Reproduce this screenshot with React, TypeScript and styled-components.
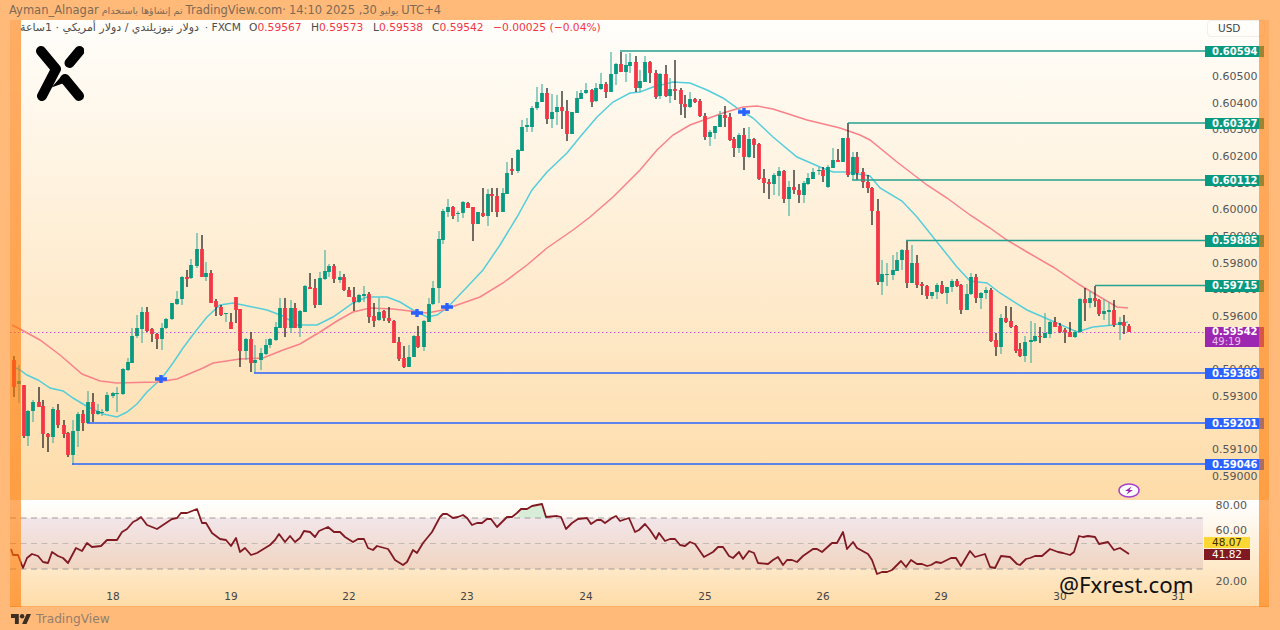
import React from "react";
import styled, { createGlobalStyle } from "styled-components";

const GlobalStyle = createGlobalStyle`
  html, body { margin: 0; padding: 0; background: #ffba7a; }
  body { font-family: "DejaVu Sans", sans-serif; }
`;

const Page = styled.div`
  width: 1280px;
  height: 630px;
  overflow: hidden;
  display: flex;
  flex-direction: column;
  background: #ffba7a;
`;

const TopBar = styled.div`
  height: 20px;
  padding-left: 9px;
  display: flex;
  align-items: center;
  gap: 3px;
  font-size: 11.5px;
  color: #7d6a55;
  white-space: nowrap;
`;

const Seg = styled.span<{ $rtl?: boolean; $size?: number }>`
  direction: ${(p) => (p.$rtl ? "rtl" : "ltr")};
  ${(p) => (p.$size ? `font-size: ${p.$size}px;` : "")}
`;

const Frame = styled.div`
  position: relative;
  width: 1259px;
  margin-left: 10px;
  display: flex;
  flex-direction: column;
`;

const MainPane = styled.div`
  position: relative;
  height: 480px;
  background: linear-gradient(#fffefb, #fedca9);
  overflow: hidden;
`;

const RsiPane = styled.div`
  position: relative;
  height: 106px;
  background: linear-gradient(#ffffff, #fedca9);
  border-bottom: 1px solid #ffad60;
  overflow: hidden;
`;

const Plot = styled.svg`
  position: absolute;
  inset: 0;
  display: block;
`;

const SideStrip = styled.div<{ $side: "left" | "right" }>`
  position: absolute;
  top: 0;
  bottom: 0;
  ${(p) => p.$side}: 0;
  width: ${(p) => (p.$side === "left" ? 11 : 10)}px;
  background: rgba(255, 118, 0, 0.6);
  pointer-events: none;
`;

const Legend = styled.div`
  position: absolute;
  left: 10px;
  top: 0;
  height: 14px;
  display: flex;
  align-items: center;
  font-size: 10.7px;
  color: #4d4d4d;
  white-space: nowrap;
`;

const LegendName = styled.span`
  display: flex;
  justify-content: space-between;
  width: 229px;
  padding-right: 8px;
  box-sizing: border-box;
`;

const LegendValue = styled.span<{ $w: number }>`
  width: ${(p) => p.$w}px;
`;

const Red = styled.span`
  color: #f23645;
`;

const Logo = styled.svg`
  position: absolute;
  left: 26px;
  top: 26px;
`;

const UsdButton = styled.div`
  position: absolute;
  left: 1197px;
  top: 0;
  width: 58px;
  height: 17px;
  box-sizing: border-box;
  padding-left: 10px;
  border: 1px solid #f3eee8;
  border-radius: 4px;
  font-size: 10.5px;
  line-height: 15px;
  color: #444;
`;

const AxisText = styled.div<{ $y: number }>`
  position: absolute;
  left: 1202px;
  top: ${(p) => p.$y - 6}px;
  height: 14px;
  font-size: 11px;
  line-height: 14px;
  color: #555;
`;

const PriceTag = styled.div<{ $y: number; $bg: string }>`
  position: absolute;
  left: 1195px;
  top: ${(p) => p.$y - 5.5}px;
  width: 59px;
  height: 11.5px;
  padding-left: 7px;
  box-sizing: border-box;
  background: ${(p) => p.$bg};
  color: #fff;
  font-size: 10px;
  font-weight: 700;
  line-height: 11.5px;
`;

const LiveTag = styled.div`
  position: absolute;
  left: 1195px;
  top: 307px;
  width: 59px;
  height: 20px;
  padding: 0 0 0 7px;
  box-sizing: border-box;
  background: #9c27b0;
  color: #fff;
  font-size: 10px;
  font-weight: 700;
  line-height: 10px;
`;

const LiveTime = styled.div`
  color: #e6c4ec;
  font-weight: 400;
`;

const Bolt = styled.svg`
  position: absolute;
  left: 1108px;
  top: 463px;
`;

const RsiTag = styled.div<{ $y: number; $bg: string; $fg: string }>`
  position: absolute;
  left: 1194px;
  top: ${(p) => p.$y}px;
  width: 46px;
  height: 11px;
  background: ${(p) => p.$bg};
  color: ${(p) => p.$fg};
  font-size: 10.5px;
  line-height: 11px;
  text-align: center;
`;

const TimeText = styled.div<{ $x: number }>`
  position: absolute;
  top: 90px;
  left: ${(p) => p.$x - 30}px;
  width: 40px;
  text-align: center;
  font-size: 10.5px;
  line-height: 13px;
  color: #444;
`;

const Watermark = styled.div`
  position: absolute;
  left: 1049px;
  top: 69px;
  font-family: "Noto Sans", sans-serif;
  font-size: 22.3px;
  line-height: 32px;
  color: #111;
  white-space: nowrap;
`;

const Footer = styled.div`
  padding: 5px 0 0 10px;
  display: flex;
  align-items: center;
  gap: 4px;
  font-size: 12.2px;
  color: #927f6b;
`;

// x, body top, body bottom, wick top, wick bottom, 1 = up / 0 = down
const C: number[][] = [
[14,360,387,356,397,0],[19,381,384,365,403,1],[24,385,436,385,438,0],[28,411,436,410,446,1],[33,402,411,400,422,1],[39,402,407,387,407,0],[43,406,434,400,448,0],[48,434,437,433,452,0],[53,409,437,407,443,1],[58,410,425,404,428,0],[64,425,434,420,438,0],[68,433,455,432,457,0],[73,431,455,420,465,1],[78,414,431,412,447,1],[83,414,423,410,431,0],[88,402,423,391,423,1],[93,402,414,393,422,0],[98,411,414,404,415,1],[102,412,413,409,416,1],[107,395,411,392,412,1],[113,393,396,392,398,1],[117,393,394,387,412,1],[123,369,394,368,395,1],[128,362,370,358,371,1],[132,336,363,328,363,1],[137,328,336,315,338,1],[142,312,329,307,343,1],[147,312,331,307,332,0],[152,329,334,328,342,0],[157,334,339,333,349,0],[162,328,339,323,350,1],[166,319,328,318,329,1],[172,303,319,303,320,1],[177,299,304,291,305,1],[182,277,299,276,305,1],[187,277,279,270,287,0],[191,265,278,259,279,1],[197,249,266,233,268,1],[202,249,277,235,277,0],[206,273,277,262,281,1],[211,273,303,270,303,0],[216,301,307,299,316,0],[221,307,315,305,316,0],[226,313,314,313,322,1],[231,322,329,313,329,0],[236,297,310,297,323,0],[240,309,351,309,367,0],[246,339,351,338,360,1],[251,339,363,332,372,0],[255,360,363,345,373,1],[261,353,360,348,370,1],[266,345,354,339,355,1],[270,339,345,338,348,1],[276,327,340,322,341,1],[280,308,328,298,328,1],[285,308,328,298,337,0],[291,308,328,300,333,1],[295,308,328,303,328,0],[300,311,328,310,337,1],[305,286,312,285,312,1],[310,287,289,273,289,0],[315,288,305,279,308,0],
[320,278,305,272,305,1],[325,271,279,250,280,1],[329,266,272,264,277,1],[334,266,279,264,283,0],[340,277,280,271,283,1],[344,277,290,274,291,0],[349,290,297,287,297,0],[354,297,302,287,311,0],[359,295,302,294,303,1],[364,294,296,286,302,1],[369,294,317,292,323,0],[374,316,321,303,327,0],[379,312,320,298,321,1],[384,311,318,310,321,0],[389,318,321,307,323,0],[394,321,343,320,343,0],[399,342,359,337,361,0],[404,358,367,346,368,0],[409,357,367,345,367,1],[414,336,357,335,357,1],[418,336,347,326,348,0],[424,321,347,320,351,1],[429,304,322,298,322,1],[433,288,304,281,305,1],[439,239,288,231,303,1],[443,211,240,209,244,1],[448,207,212,199,217,1],[453,207,216,206,219,0],[458,213,214,211,222,1],[463,202,213,201,218,1],[468,203,208,202,208,0],[473,207,224,207,241,0],[478,212,224,212,224,1],[483,213,216,188,217,0],[488,194,216,189,226,1],[492,194,196,188,212,0],[497,196,212,188,217,0],[503,193,212,188,212,1],[507,173,194,162,194,1],[512,169,171,158,175,0],[518,150,171,149,173,1],[522,127,151,120,151,1],[527,125,127,118,132,1],[532,108,127,106,132,1],[537,102,108,87,110,1],[542,93,102,84,102,1],[547,93,119,88,124,0],[552,112,119,94,128,1],[557,107,112,95,125,1],[562,107,111,91,129,0],[567,111,134,100,141,0],[572,112,134,112,134,1],[577,98,113,91,113,1],[581,93,99,90,99,1],[586,90,93,83,94,1],[592,90,102,89,107,0],[596,88,101,83,102,1],[601,84,89,73,90,1],[606,84,92,82,98,0],[611,74,92,52,92,1],[616,64,74,63,85,1],[621,64,72,52,72,0],[626,65,72,54,82,1],[630,62,66,53,73,1],[636,62,88,56,92,0],
[640,81,88,70,92,1],[645,62,82,56,82,1],[650,62,73,61,83,0],[656,73,97,70,99,0],[660,74,96,73,99,1],[666,74,96,65,97,0],[670,89,96,78,103,1],[675,89,91,60,100,0],[681,90,104,88,115,0],[685,104,107,95,118,0],[690,99,107,92,108,1],[695,99,102,98,103,0],[700,101,116,99,117,0],[705,116,137,113,140,0],[710,132,137,130,146,1],[715,126,133,126,139,1],[720,115,127,111,127,1],[725,115,118,106,127,0],[730,117,140,113,141,0],[734,139,148,137,157,0],[739,135,148,133,153,1],[744,135,157,128,170,0],[749,139,157,127,158,1],[754,139,145,138,158,0],[759,144,179,143,180,0],[764,178,183,169,193,0],[769,182,184,179,199,0],[774,175,184,173,195,1],[779,171,176,167,196,1],[784,171,199,170,203,0],[789,187,199,181,216,1],[794,187,190,170,194,0],[799,190,195,184,203,0],[804,183,195,181,203,1],[808,178,184,173,185,1],[813,172,179,168,179,1],[819,170,171,167,175,1],[823,170,176,167,182,0],[828,167,187,165,188,1],[833,160,168,148,168,1],[838,160,162,149,162,0],[843,138,162,138,162,1],[848,138,175,123,177,0],[853,157,175,152,180,1],[857,157,173,152,180,0],[863,172,182,168,188,0],[868,182,188,175,193,0],[872,188,211,187,225,0],[878,211,282,199,285,0],[882,274,282,260,295,1],[887,274,275,263,286,1],[893,270,275,255,280,1],[897,260,271,252,271,1],[902,250,260,249,270,1],[907,250,283,241,288,0],[912,263,283,245,283,1],[917,263,285,255,288,0],[922,284,286,282,295,0],[927,286,296,285,299,0],[932,292,296,292,299,1],[937,285,292,283,299,1],[942,285,293,281,294,0],[947,287,293,287,304,1],[952,281,287,279,292,1],[957,281,286,279,287,0],
[961,285,310,284,314,0],[967,294,310,284,310,1],[971,277,294,273,295,1],[976,277,298,274,303,0],[981,293,298,292,309,1],[986,290,293,287,299,1],[991,290,341,288,342,0],[996,340,347,333,356,0],[1001,318,347,314,354,1],[1006,318,322,306,323,0],[1011,321,327,307,328,0],[1016,326,351,325,353,0],[1020,349,356,343,357,0],[1025,342,356,336,362,1],[1031,340,342,321,363,1],[1035,336,341,323,342,1],[1040,336,337,327,343,0],[1045,333,338,313,338,1],[1050,322,334,321,338,1],[1055,322,327,317,327,0],[1060,326,332,323,333,0],[1065,330,332,328,343,0],[1070,332,337,322,337,0],[1075,332,337,330,338,1],[1080,299,332,298,333,1],[1085,299,303,288,321,0],[1090,298,303,291,308,1],[1095,298,301,286,307,0],[1099,300,314,299,316,0],[1104,311,314,299,320,1],[1109,310,312,302,326,1],[1114,310,325,300,327,0],[1120,322,325,317,340,1],[1124,322,326,315,334,0],[1129,326,332,324,332,0],
];

const CYAN = "12,366 20,370 27,375 38,380 50,388 63,391 73,398 88,407 103,414 117,417 127,412 137,404 147,392 162,378 173,363 183,348 195,332 207,317 220,305 233,303 243,305 267,310 283,316 297,325 317,325 333,317 353,303 367,297 387,297 400,302 413,310 427,317 437,315 447,308 467,287 483,270 500,245 517,217 532,190 547,172 567,153 580,137 597,117 613,102 630,93 640,92 653,87 673,82 690,83 707,90 723,98 740,110 753,118 773,137 797,157 820,167 833,172 847,172 870,176 880,188 902,201 917,217 933,237 957,267 970,281 987,283 1000,293 1027,310 1050,320 1077,332 1093,327 1113,325 1128,322";
const SALMON = "12,325 20,329 40,340 60,355 82,374 100,381 117,383 157,382 177,379 203,368 213,363 240,359 263,358 283,350 300,344 320,332 337,321 353,312 370,308 393,309 427,313 443,310 480,297 503,283 527,265 547,248 573,230 590,217 613,197 640,170 657,150 673,135 690,125 723,113 743,107 757,106 773,109 807,120 840,128 860,135 870,140 897,162 927,185 947,198 970,215 990,228 1007,240 1027,252 1053,267 1080,285 1100,297 1117,307 1128,308";
const RSI = "11,549 13,555 18,555 23,568 27,558 32,554 38,556 43,562 48,563 52,552 58,556 63,558 68,563 76,548 82,551 87,543 92,547 101,546 107,540 117,540 122,532 127,529 133,522 137,520 141,517 147,525 157,529 172,519 177,518 181,513 187,513 197,509 202,523 206,523 212,533 220,539 226,540 231,546 236,538 240,552 245,548 251,555 257,553 270,545 275,540 279,534 285,542 290,536 295,542 300,538 304,531 310,532 315,537 319,531 328,527 334,532 340,532 345,537 353,542 358,539 364,539 368,548 373,550 377,546 388,549 390,552 395,560 403,565 407,562 413,550 417,553 423,543 432,532 440,517 443,514 447,514 453,518 458,517 463,515 467,518 472,525 477,523 482,523 487,519 491,519 497,527 502,522 507,517 512,517 517,513 521,509 527,509 532,506 542,504 546,517 557,516 561,517 566,529 572,523 578,519 587,518 591,524 597,520 601,520 605,523 612,518 616,516 620,521 629,518 635,532 639,530 645,524 650,530 656,539 659,533 665,541 670,539 675,539 680,545 685,546 690,542 695,544 704,557 713,552 718,547 723,547 729,556 733,558 739,552 743,559 749,551 754,553 758,563 768,564 773,560 778,557 783,565 787,560 792,560 797,562 803,556 813,549 817,549 822,552 832,543 837,543 843,532 847,549 853,542 857,548 868,554 872,560 877,574 882,572 887,572 892,570 901,561 906,567 911,560 917,564 922,564 927,566 931,565 936,562 941,563 951,558 956,558 961,566 970,551 975,557 985,554 990,567 995,568 1001,556 1010,557 1017,564 1020,565 1026,559 1030,558 1035,556 1042,556 1050,549 1058,552 1063,553 1070,555 1074,552 1079,536 1083,537 1088,536 1095,537 1099,544 1108,542 1114,550 1120,548 1129,554";

const LEVELS = [
  { x: 620, y: 51, price: "0.60594", c: "#26a08f", tag: "#089981" },
  { x: 848, y: 123, price: "0.60327", c: "#26a08f", tag: "#089981" },
  { x: 852, y: 180, price: "0.60112", c: "#26a08f", tag: "#089981" },
  { x: 906, y: 240.5, price: "0.59885", c: "#26a08f", tag: "#089981" },
  { x: 1095, y: 285.5, price: "0.59715", c: "#26a08f", tag: "#089981" },
  { x: 254, y: 373, price: "0.59386", c: "#2962ff", tag: "#2962ff" },
  { x: 87, y: 423, price: "0.59201", c: "#2962ff", tag: "#2962ff" },
  { x: 72, y: 464, price: "0.59046", c: "#2962ff", tag: "#2962ff" },
];

const AXIS = ["0.60500","0.60400","0.60300","0.60200","0.60100","0.60000","0.59900","0.59800","0.59700","0.59600","0.59500","0.59400","0.59300","0.59200","0.59100","0.59000"];
const DAYS: [string, number][] = [["18",113],["19",231],["22",349],["23",467],["24",586],["25",705],["26",823],["29",941],["30",1060],["31",1178]];
const CROSSES = [[161,379],[417,313],[447,307],[744,112]];

function CandleChart() {
  return (
    <Plot width={1259} height={480} viewBox="10 20 1259 480">
      <line x1={10} x2={1205} y1={332.5} y2={332.5} stroke="#c254d6" strokeWidth={1} strokeDasharray="1.5 2.5" />
      <polyline points={CYAN} fill="none" stroke="#54cedb" strokeWidth={1.5} />
      <polyline points={SALMON} fill="none" stroke="#f8828a" strokeWidth={1.5} />
      {C.map(([x, t, b, h, l, up], i) => (
        <g key={i}>
          <rect x={x - 0.6} y={h} width={1.2} height={l - h} fill={up ? "#4bb3a2" : "#141414"} />
          <rect x={x - 1.9} y={t} width={3.8} height={Math.max(b - t, 1)} fill={up ? "#089981" : "#f23645"} />
        </g>
      ))}
      {LEVELS.map((l) => (
        <line key={l.price} x1={l.x} x2={1205} y1={l.y} y2={l.y} stroke={l.c} strokeWidth={1.4} />
      ))}
      {CROSSES.map(([x, y]) => (
        <path key={x} d={`M${x - 6} ${y}H${x + 6}M${x} ${y - 4}V${y + 4}`} stroke="#2962ff" strokeWidth={3.4} fill="none" />
      ))}
    </Plot>
  );
}

function RsiChart() {
  return (
    <Plot width={1259} height={106} viewBox="10 500 1259 106">
      <defs>
        <linearGradient id="band" x1="0" x2="0" y1="0" y2="1">
          <stop offset="0" stopColor="#ead9e6" stopOpacity={0.6} />
          <stop offset="1" stopColor="#e6c8bc" stopOpacity={0.6} />
        </linearGradient>
      </defs>
      <rect x={21} y={518} width={1182} height={51} fill="url(#band)" />
      <polygon points="517,518 521,509 527,509 532,506 542,504 546,517 546,518" fill="#d8edd8" />
      {[518, 543.5, 569].map((y, i) => (
        <line key={y} x1={10} x2={1203} y1={y} y2={y} stroke={i === 1 ? "#c4bab4" : "#a09c9c"} strokeWidth={1} strokeDasharray="6 4.5" />
      ))}
      <polyline points={RSI} fill="none" stroke="#801922" strokeWidth={1.8} strokeLinejoin="round" />
    </Plot>
  );
}

export default function App() {
  return (
    <Page>
      <GlobalStyle />
      <TopBar>
        <Seg>Ayman_Alnagar</Seg>
        <Seg $rtl $size={9.6}>تم إنشاؤها باستخدام</Seg>
        <Seg>TradingView.com·</Seg>
        <Seg>14:10 2025 ,30</Seg>
        <Seg $rtl $size={9.6}>يوليو</Seg>
        <Seg>UTC+4</Seg>
      </TopBar>
      <Frame>
        <MainPane>
          <CandleChart />
          <Legend>
            <LegendName>
              <Seg $rtl $size={11}>دولار نيوزيلندي / دولار أمريكي · 1ساعة</Seg>
              <Seg>· FXCM</Seg>
            </LegendName>
            <LegendValue $w={62}>O<Red>0.59567</Red></LegendValue>
            <LegendValue $w={62}>H<Red>0.59573</Red></LegendValue>
            <LegendValue $w={59}>L<Red>0.59538</Red></LegendValue>
            <LegendValue $w={61}>C<Red>0.59542</Red></LegendValue>
            <Red>−0.00025 (−0.04%)</Red>
          </Legend>
          <Logo width={48} height={57} viewBox="0 0 48 57" fill="none" stroke="#000" strokeWidth={10} strokeLinecap="round" strokeLinejoin="round">
            <path d="M5 5 L20 23 L6 50" />
            <path d="M43.5 5 L33.5 17" />
            <path d="M29 33 L43 50" />
            <polygon points="15.5,41.5 26.5,29 33,36 28,37" fill="#000" stroke="none" />
          </Logo>
          <UsdButton>USD</UsdButton>
          {AXIS.map((t, i) => (
            <AxisText key={t} $y={56 + i * 26.65}>{t}</AxisText>
          ))}
          {LEVELS.map((l) => (
            <PriceTag key={l.price} $y={l.y - 20} $bg={l.tag}>{l.price}</PriceTag>
          ))}
          <LiveTag>
            0.59542
            <LiveTime>49:19</LiveTime>
          </LiveTag>
          <Bolt width={22} height={15} viewBox="0 0 22 15">
            <ellipse cx={11} cy={7.5} rx={10} ry={6.5} fill="#fff" stroke="#a742c9" strokeWidth={1.5} />
            <path d="M13.5 3.5 L7 8 L10.5 8 L8.5 11.5 L15 7 L11.5 7 Z" fill="#9c27b0" />
          </Bolt>
        </MainPane>
        <RsiPane>
          <RsiChart />
          <AxisText $y={5}>&nbsp;80.00</AxisText>
          <AxisText $y={30}>&nbsp;60.00</AxisText>
          <AxisText $y={81}>&nbsp;20.00</AxisText>
          <RsiTag $y={37} $bg="#fdd835" $fg="#3a3000">48.07</RsiTag>
          <RsiTag $y={49} $bg="#801922" $fg="#fff">41.82</RsiTag>
          {DAYS.map(([d, x]) => (
            <TimeText key={d} $x={x}>{d}</TimeText>
          ))}
          <Watermark>@Fxrest.com</Watermark>
        </RsiPane>
        <SideStrip $side="left" />
        <SideStrip $side="right" />
      </Frame>
      <Footer>
        <svg width={22} height={10} viewBox="0 0 36 18" fill="#3b2f22">
          <path d="M14 18H7V7H0V0h14v18zM28 18h-8L28 0h8l-8 18z" />
          <circle cx={20} cy={4} r={4} />
        </svg>
        TradingView
      </Footer>
    </Page>
  );
}
